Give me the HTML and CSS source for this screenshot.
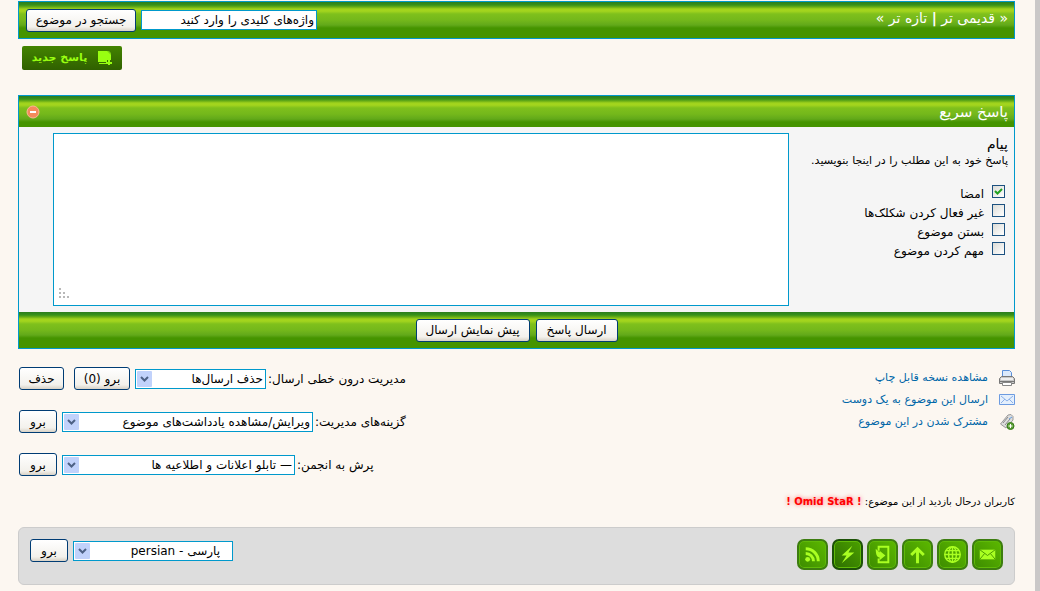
FILE: index.html
```html
<!DOCTYPE html>
<html lang="fa" dir="rtl">
<head>
	<title>پاسخ سریع</title>
	<meta charset="utf-8">
	<link rel="stylesheet" href="styles.css">
</head>

<body>
	<div class="page">
		<div class="bar search-bar">
			<div class="pager"><a href="#">« قدیمی تر</a> <b>|</b> <a href="#">تازه تر »</a></div>
			<form class="search">
				<input class="field keywords" type="text" aria-label="جستجو" value="واژه‌های کلیدی را وارد کنید">
				<button type="button" class="btn btn-search">جستجو در موضوع</button>
			</form>
		</div>

		<div class="actions">
			<a class="new-reply" href="#">
				<svg width="14" height="14" viewBox="0 0 14 14"><path fill="#9f1" d="M0 0h10l3 3v6H9v2H0z"/><path fill="#9f1" d="M1 12h7v1H1zM10 9h2v2h2v2h-2v1h-2v-1H8v-2h2z"/><path fill="#7c1" d="M9 0l4 4V2l-2-2z"/></svg>
				<span>پاسخ جدید</span>
			</a>
		</div>

		<form class="box">
			<div class="bar box-head">
				<h2>پاسخ سریع</h2>
				<button type="button" class="collapse" aria-label="بستن">
					<svg width="14" height="14" viewBox="0 0 14 14"><circle cx="7" cy="7" r="6" fill="#f58a5c" stroke="#fab896"/><path fill="#fff" d="M4 6h6v2H4z"/></svg>
				</button>
			</div>
			<div class="box-body">
				<div class="options">
					<label class="title" for="message">پیام</label>
					<p>پاسخ خود به این مطلب را در اینجا بنویسید.</p>
					<label class="check"><input type="checkbox" checked> <span>امضا</span></label>
					<label class="check"><input type="checkbox"> <span>غیر فعال کردن شکلک‌ها</span></label>
					<label class="check"><input type="checkbox"> <span>بستن موضوع</span></label>
					<label class="check"><input type="checkbox"> <span>مهم کردن موضوع</span></label>
				</div>
				<textarea id="message"></textarea>
			</div>
			<div class="bar box-foot">
				<button type="button" class="btn btn-send">ارسال پاسخ</button>
				<button type="button" class="btn btn-preview">پیش نمایش ارسال</button>
			</div>
		</form>

		<div class="tools">
			<ul class="links">
				<li>
					<svg width="16" height="16" viewBox="0 0 16 16"><path fill="#dbe9fb" stroke="#5b8fd8" d="M3.500 7V.5h7l2 2V7"/><path fill="#c8c8c8" stroke="#777" d="M2.500 6.500h11l2 2v5H.5v-5z"/><path fill="#eee" d="M2 8h12v2H2z"/><path fill="#777" d="M1 11h14v1H1z"/><path fill="#fff" stroke="#888" d="M3.500 12.500h9v3h-9z"/></svg>
					<a href="#">مشاهده نسخه قابل چاپ</a>
				</li>
				<li>
					<svg width="16" height="16" viewBox="0 0 16 16"><path fill="#e4effc" stroke="#6c9be0" d="M.5 2.500h15v10H.5z"/><path fill="none" stroke="#8bb0e8" d="M2 4l6 5 6-5M2 11l4-4M14 11l-4-4"/></svg>
					<a href="#">ارسال این موضوع به یک دوست</a>
				</li>
				<li>
					<svg width="16" height="16" viewBox="0 0 16 16"><path fill="#ddd" stroke="#999" d="M1.500 10L9 1l3-.5 2 2V6l-7 8z"/><path fill="none" stroke="#888" d="M4 9l5-6M6 11l5-6"/><path fill="none" stroke="#5c9be0" d="M10 5l3-2"/><circle cx="11.500" cy="12" r="3.500" fill="#5b9e35" stroke="#347a18"/><path stroke="#fff" stroke-width="1" d="M9.500 12h4M11.500 10v4"/></svg>
					<a href="#">مشترک شدن در این موضوع</a>
				</li>
			</ul>
			<div class="moderation">
				<form class="row">
					<label for="inline">مدیریت درون خطی ارسال:</label>
					<select id="inline" class="field w-inline"><option>حذف ارسال‌ها</option></select>
					<button type="button" class="btn btn-count">برو (0)</button>
					<button type="button" class="btn btn-clear">حذف</button>
				</form>
				<form class="row">
					<label for="mod">گزینه‌های مدیریت:</label>
					<select id="mod" class="field w-mod"><option>ویرایش/مشاهده یادداشت‌های موضوع</option></select>
					<button type="button" class="btn btn-go">برو</button>
				</form>
				<form class="row">
					<label for="jump">پرش به انجمن:</label>
					<select id="jump" class="field w-jump"><option>— تابلو اعلانات و اطلاعیه ها</option></select>
					<button type="button" class="btn btn-go">برو</button>
				</form>
			</div>
		</div>

		<p class="viewers">کاربران درحال بازدید از این موضوع: <a href="#" dir="ltr">! Omid StaR !</a></p>

		<footer>
			<nav>
				<a href="#" aria-label="تماس"><svg viewBox="0 0 32 32"><path fill="#af2" d="M8 11h16v10H8z"/><path fill="none" stroke="#4a9a00" d="M8 11l8 6 8-6M8 21l5-6M24 21l-5-6"/></svg></a>
				<a href="#" aria-label="سایت"><svg viewBox="0 0 32 32"><g fill="none" stroke="#af2" stroke-width="1.500"><circle cx="16" cy="16" r="8"/><ellipse cx="16" cy="16" rx="4" ry="8"/><path d="M16 8v16M8 16h16M9 12h14M9 20h14"/></g></svg></a>
				<a href="#" aria-label="بالا"><svg viewBox="0 0 32 32"><path fill="none" stroke="#af2" stroke-width="3" d="M16 25V10M9.500 16.500L16 10l6.500 6.500"/></svg></a>
				<a href="#" aria-label="ورود"><svg viewBox="0 0 32 32"><path fill="none" stroke="#af2" stroke-width="2" d="M12 12V8h10v16H12v-4"/><path fill="#af2" d="M9 10l4 4v-2l6 5-6 5v-3c-3 0-4-4-4-9z"/></svg></a>
				<a href="#" class="dark" aria-label="آرشیو"><svg viewBox="0 0 32 32"><path fill="#af2" d="M21 7l-11 10h5l-5 8 13-11h-6z"/></svg></a>
				<a href="#" aria-label="خوراک"><svg viewBox="0 0 32 32"><circle cx="11" cy="21" r="2.500" fill="#af2"/><path fill="none" stroke="#af2" stroke-width="3" d="M9 15a8 8 0 0 1 8 8M9 10a13 13 0 0 1 13 13"/></svg></a>
			</nav>
			<form class="row">
				<select class="field w-lang" aria-label="زبان"><option>پارسی - persian</option></select>
				<button type="button" class="btn btn-go">برو</button>
			</form>
		</footer>
	</div>
</body>
</html>
```
FILE: styles.css
```css
* {
	box-sizing: border-box;
	margin: 0;
}

body {
	background-color: #fcf7f1;
	border-right: 5px solid #cac8c8;
	min-height: 100vh;
	padding: 0 20px 6px 18px;
	font: 11px/16px "DejaVu Sans", sans-serif;
	color: #000;
}

a {
	color: #0066a8;
	text-decoration: none;
}

/* green glossy strips */
.bar {
	display: flex;
	align-items: center;
	color: #fff;
	background: #459400 linear-gradient(#2b7d1e 0, #38921a 3px, #69ad17 5px, #a0d31d 7px, #a4d51e 9px, #7fc01c 12px, #74b81b 18px, #62a91a 23px, #459400 26px);
}

.bar a {
	color: #fff;
}

.search-bar {
	justify-content: space-between;
	height: 38px;
	margin-top: 1px;
	padding: 0 6px 0 7px;
	border: 1px solid #09c;
}

.pager {
	margin-bottom: 4px;
	font-size: 14px;
}

.search {
	display: flex;
	align-items: center;
	gap: 5px;
}

.field {
	height: 20px;
	padding: 0 2px;
	border: 1px solid #09c;
	border-radius: 0;
	background-color: #fff;
	color: #000;
	font: 12px/18px "DejaVu Sans", sans-serif;
}

.keywords {
	width: 176px;
}

select.field {
	appearance: none;
	background-image: url("data:image/svg+xml,%3Csvg xmlns='http://www.w3.org/2000/svg' width='15' height='16'%3E%3Crect width='15' height='16' rx='1' fill='%23c1d2fb'/%3E%3Cpath d='M4 6l3.500 3.500L11 6' fill='none' stroke='%234d6185' stroke-width='2'/%3E%3C/svg%3E");
	background-repeat: no-repeat;
	background-position: 1px 1px;
}

.btn {
	height: 23px;
	padding: 0;
	border: 1px solid #003c74;
	border-radius: 3px;
	background: linear-gradient(#fff, #f3f1ec 80%, #d8d2c6);
	color: #000;
	font: 12px/18px "DejaVu Sans", sans-serif;
	white-space: nowrap;
}

.btn-search {
	width: 110px;
}

.btn-send {
	width: 82px;
}

.btn-preview {
	width: 114px;
}

.btn-count {
	width: 56px;
}

.btn-clear {
	width: 45px;
}

.btn-go {
	width: 38px;
}

.actions {
	display: flex;
	justify-content: flex-end;
	padding: 7px 0 25px 4px;
}

.new-reply {
	display: flex;
	align-items: center;
	justify-content: center;
	gap: 11px;
	width: 100px;
	height: 24px;
	border-radius: 2px;
	background: linear-gradient(#438400, #306000);
	color: #9f1;
	font-weight: bold;
}

.box {
	border: 1px solid #09c;
	background-color: #f5f5f5;
}

.box-head {
	justify-content: space-between;
	height: 31px;
	padding: 0 6px 0 7px;
}

.box-head h2 {
	font-size: 15px;
	font-weight: normal;
}

.collapse {
	display: flex;
	padding: 0;
	border: 0;
	background: none;
}

.box-body {
	display: flex;
	padding: 6px 6px 6px 34px;
}

.options {
	width: 219px;
	flex: none;
	padding-top: 2px;
}

.options .title {
	display: block;
	font-size: 14px;
	line-height: 18px;
}

.options p {
	margin-bottom: 13px;
	font-size: 11px;
	line-height: 16px;
	white-space: nowrap;
}

.check {
	display: flex;
	align-items: center;
	gap: 8px;
	height: 19px;
	padding-right: 3px;
	font-size: 12px;
}

.check span {
	padding-top: 4px;
}

.check input {
	appearance: none;
	width: 13px;
	height: 13px;
	border: 1px solid #1c5180;
	background: linear-gradient(135deg, #dcdcd7, #fff);
}

.check input:checked {
	background: url("data:image/svg+xml,%3Csvg xmlns='http://www.w3.org/2000/svg' width='11' height='11'%3E%3Cpath d='M2 5l2.500 2.500L9 3' fill='none' stroke='%2321a121' stroke-width='2'/%3E%3C/svg%3E") no-repeat, linear-gradient(135deg, #dcdcd7, #fff);
}

textarea {
	display: block;
	flex: 1;
	height: 173px;
	border: 1px solid #09c;
	resize: none;
	background: #fff url("data:image/svg+xml,%3Csvg xmlns='http://www.w3.org/2000/svg' width='10' height='10' fill='%23b8b8b8'%3E%3Cpath d='M0 0h2v2H0zM0 4h2v2H0zM4 4h2v2H4zM0 8h2v2H0zM4 8h2v2H4zM8 8h2v2H8z'/%3E%3C/svg%3E") no-repeat left 5px bottom 7px;
	font: 12px/18px "DejaVu Sans", sans-serif;
}

.box-foot {
	justify-content: center;
	gap: 6px;
	height: 36px;
}

.tools {
	display: flex;
	justify-content: space-between;
	padding-top: 18px;
}

.links {
	list-style: none;
	padding: 0;
}

.links li {
	display: flex;
	align-items: center;
	gap: 11px;
	height: 22px;
}

.moderation {
	display: flex;
	flex-direction: column;
	gap: 20px;
	padding-left: 1px;
}

.row {
	display: flex;
	align-items: center;
	justify-content: flex-end;
	gap: 5px;
}

.row label {
	margin-left: -3px;
	font-size: 12px;
}

.btn-clear {
	margin-right: 5px;
}

.w-inline {
	width: 131px;
}

.w-mod {
	width: 251px;
}

.w-jump {
	width: 233px;
}

.w-lang {
	width: 160px;
	padding-right: 12px;
}

.viewers {
	padding: 18px 0 17px;
	font-size: 10px;
}

.viewers a {
	color: #f00;
	font-weight: bold;
	text-shadow: 0 0 4px #f66;
}

footer {
	display: flex;
	justify-content: space-between;
	align-items: flex-start;
	min-height: 58px;
	padding: 11px;
	border: 1px solid #ccc;
	border-radius: 6px;
	background-color: #ddd;
}

footer nav {
	display: flex;
	gap: 4px;
}

footer nav a {
	width: 31px;
	height: 31px;
	border: 2px solid #3d7d10;
	border-radius: 7px;
	background: linear-gradient(45deg, #3d8c00, #5cb800);
	box-shadow: inset 0 0 0 1px #5fba08;
}

footer nav .dark {
	border-color: #1d5208;
	background: linear-gradient(45deg, #2d6e00, #4ba000);
}

footer nav svg {
	display: block;
	width: 31px;
	height: 31px;
	margin: -2px;
}
```
